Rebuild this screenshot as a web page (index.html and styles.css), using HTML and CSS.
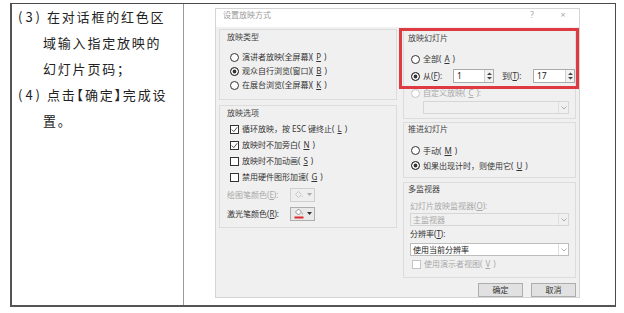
FILE: index.html
```html
<!DOCTYPE html>
<html lang="zh-CN">
<head>
    <meta charset="UTF-8">
    <meta name="viewport" content="width=device-width, initial-scale=1.0">
    <title>设置放映方式</title>
    <link rel="stylesheet" href="styles.css">
</head>
<body>

<div class="page">
    <div class="sheet">

        <!-- Steps text -->
        <div class="steps">
            <p class="step"><span class="step-no">(3)</span>在对话框的红色区<br>域输入指定放映的<br>幻灯片页码；</p>
            <p class="step"><span class="step-no">(4)</span>点击<span class="punct">【</span>确定<span class="punct">】</span>完成设<br>置。</p>
        </div>

        <!-- Dialog screenshot -->
        <div class="shot">
            <div class="dialog">
                <div class="titlebar">
                    <span class="title">设置放映方式</span>
                    <span class="tb-btn">?</span>
                    <span class="tb-btn">×</span>
                </div>

                <div class="dlg-body">
                    <div class="col col-left">
                        <div class="group g-type">
                            <div class="group-title">放映类型</div>
                            <div class="options">
                                <div class="opt"><span class="radio"></span>演讲者放映(全屏幕)(<u>P</u>)</div>
                                <div class="opt"><span class="radio on"></span>观众自行浏览(窗口)(<u>B</u>)</div>
                                <div class="opt"><span class="radio"></span>在展台浏览(全屏幕)(<u>K</u>)</div>
                            </div>
                        </div>

                        <div class="group g-opts">
                            <div class="group-title">放映选项</div>
                            <div class="options">
                                <div class="opt opt-check"><span class="check"><svg width="7" height="7" viewBox="0 0 9 9"><path d="M1 4.6 L3.6 7.2 L8 1.6" fill="none" stroke="#333" stroke-width="1.1"/></svg></span>循环放映，按 ESC 键终止(<u>L</u>)</div>
                                <div class="opt opt-check"><span class="check"><svg width="7" height="7" viewBox="0 0 9 9"><path d="M1 4.6 L3.6 7.2 L8 1.6" fill="none" stroke="#333" stroke-width="1.1"/></svg></span>放映时不加旁白(<u>N</u>)</div>
                                <div class="opt opt-check"><span class="check"></span>放映时不加动画(<u>S</u>)</div>
                                <div class="opt opt-check"><span class="check"></span>禁用硬件图形加速(<u>G</u>)</div>
                                <div class="color-row off">
                                    <span class="color-label">绘图笔颜色(<u>E</u>):</span>
                                    <span class="color-btn">
                                        <svg width="10" height="10" viewBox="0 0 10 10"><path d="M1.5 4.5 L4.5 1.5 L7.5 4.5 L4.5 7.5 Z" fill="none" stroke="#bbb" stroke-width="0.8"/><path d="M8.3 5.5 q0.9 1.3 0 2 q-0.9 -0.7 0 -2 Z" fill="#bbb"/></svg>
                                        <svg width="5" height="3" viewBox="0 0 5 3"><path d="M0 0 L5 0 L2.5 3 Z" fill="#aaa"/></svg>
                                    </span>
                                </div>
                                <div class="color-row">
                                    <span class="color-label">激光笔颜色(<u>R</u>):</span>
                                    <span class="color-btn">
                                        <svg width="10" height="11" viewBox="0 0 10 11"><path d="M1.5 4 L4.5 1 L7.5 4 L4.5 7 Z" fill="#fff" stroke="#777" stroke-width="0.8"/><path d="M8.3 4.8 q0.9 1.3 0 2 q-0.9 -0.7 0 -2 Z" fill="#777"/><rect x="0.5" y="8.5" width="9" height="2" fill="#e02a2a"/></svg>
                                        <svg width="5" height="3" viewBox="0 0 5 3"><path d="M0 0 L5 0 L2.5 3 Z" fill="#333"/></svg>
                                    </span>
                                </div>
                            </div>
                        </div>
                    </div>

                    <div class="col col-right">
                        <div class="group g-slides">
                            <div class="group-title">放映幻灯片</div>
                            <div class="options">
                                <div class="opt"><span class="radio"></span>全部(<u>A</u>)</div>
                                <div class="opt opt-range">
                                    <span class="radio on"></span>
                                    <span class="range-label">从(<u>F</u>):</span>
                                    <span class="spin spin-from"><span class="spin-val">1</span><span class="spin-arrows"><svg width="7" height="10" viewBox="0 0 7 10"><path d="M1 4 L3.5 1.5 L6 4 Z M1 6 L3.5 8.5 L6 6 Z" fill="#444"/></svg></span></span>
                                    <span class="range-label to">到(<u>T</u>):</span>
                                    <span class="spin spin-to"><span class="spin-val">17</span><span class="spin-arrows"><svg width="7" height="10" viewBox="0 0 7 10"><path d="M1 4 L3.5 1.5 L6 4 Z M1 6 L3.5 8.5 L6 6 Z" fill="#444"/></svg></span></span>
                                </div>
                                <div class="opt opt-custom off"><span class="radio"></span>自定义放映(<u>C</u>):</div>
                                <div class="dropdown dd-custom off">
                                    <span class="dd-text"></span>
                                    <span class="dd-arrow"><svg width="6" height="4" viewBox="0 0 6 4"><path d="M0.5 0.5 L3 3 L5.5 0.5" fill="none" stroke="#999" stroke-width="0.8"/></svg></span>
                                </div>
                            </div>
                        </div>

                        <div class="group g-advance">
                            <div class="group-title">推进幻灯片</div>
                            <div class="options">
                                <div class="opt"><span class="radio"></span>手动(<u>M</u>)</div>
                                <div class="opt"><span class="radio on"></span>如果出现计时，则使用它(<u>U</u>)</div>
                            </div>
                        </div>

                        <div class="group g-monitor">
                            <div class="group-title">多监视器</div>
                            <div class="monitor">
                                <div class="field-label off">幻灯片放映监视器(<u>O</u>):</div>
                                <div class="dropdown dd-monitor off">
                                    <span class="dd-text">主监视器</span>
                                    <span class="dd-arrow"><svg width="6" height="4" viewBox="0 0 6 4"><path d="M0.5 0.5 L3 3 L5.5 0.5" fill="none" stroke="#999" stroke-width="0.8"/></svg></span>
                                </div>
                                <div class="field-label res-label">分辨率(<u>T</u>):</div>
                                <div class="dropdown dd-res">
                                    <span class="dd-text">使用当前分辨率</span>
                                    <span class="dd-arrow"><svg width="6" height="4" viewBox="0 0 6 4"><path d="M0.5 0.5 L3 3 L5.5 0.5" fill="none" stroke="#999" stroke-width="0.8"/></svg></span>
                                </div>
                                <div class="opt opt-presenter off"><span class="check"></span>使用演示者视图(<u>V</u>)</div>
                            </div>
                        </div>

                        <div class="actions">
                            <span class="btn">确定</span>
                            <span class="btn">取消</span>
                        </div>
                    </div>
                </div>

                <!-- red highlight around the slide range -->
                <div class="highlight"></div>
            </div>
        </div>

    </div>
</div>

</body>
</html>
```

FILE: styles.css
```css
* {
    box-sizing: border-box;
}
body {
    margin: 0;
    background: #fff;
    font-family: "Noto Sans CJK SC", "Noto Sans", sans-serif;
}
.page {
    padding: 3px 8px 0 10px;
}
.sheet {
    display: grid;
    grid-template-columns: 172px 1fr;
    height: 304px;
    border-top: 1px solid #4a4a4a;
    border-left: 2px solid #555;
    border-bottom: 2px solid #555;
    border-right: 1px solid #4a4a4a;
}

/* left column text */
.steps {
    border-right: 1px solid #9a9a9a;
    padding: 0 4px 0 6px;
}
.step {
    margin: 0;
    font-size: 13px;
    line-height: 26px;
    letter-spacing: 1.8px;
    padding-left: 25px;
    text-indent: -25px;
    color: #222;
    white-space: nowrap;
}
.step-no {
    display: inline-block;
    width: 29px;
    text-indent: 0;
    letter-spacing: 3px;
}
.punct {
    font-feature-settings: "halt";
}

/* dialog */
.shot {
    padding: 4px 0 0 31px;
}
.dialog {
    position: relative;
    width: 365px;
    height: 290px;
    border: 1px solid #d4d4d4;
    background: #f0f0f0;
    font-family: "Noto Sans", "Noto Sans CJK SC", sans-serif;
    font-size: 8px;
    line-height: 12px;
    color: #333;
    display: flex;
    flex-direction: column;
}
.titlebar {
    height: 18px;
    background: #fff;
    display: flex;
    align-items: flex-start;
    padding: 0 8px 0 7px;
    color: #9a9a9a;
}
.title {
    flex: 1;
}
.tb-btn {
    width: 16px;
    text-align: center;
    font-size: 9px;
    color: #aaa;
}
.tb-btn + .tb-btn {
    margin-left: 15px;
}
.dlg-body {
    flex: 1;
    display: flex;
    gap: 6px;
    padding: 0 3px;
}
.col {
    display: flex;
    flex-direction: column;
}
.col-left {
    width: 178px;
}
.col-right {
    width: 173px;
}
.group {
    border: 1px solid #dcdcdc;
    padding-left: 7px;
}
.group-title {
    height: 12px;
    color: #444;
}
.off {
    color: #a8a8a8;
}

.opt {
    display: flex;
    align-items: center;
    gap: 3px;
    height: 14px;
    white-space: nowrap;
}
.radio {
    width: 9px;
    height: 9px;
    flex: none;
    border: 1px solid #333;
    border-radius: 50%;
    background: #fff;
}
.radio.on {
    background: #333;
    box-shadow: inset 0 0 0 1.6px #fff;
}
.off .radio,
.off .check {
    border-color: #c4c4c4;
}
.check {
    width: 9px;
    height: 9px;
    flex: none;
    border: 1px solid #333;
    background: #fff;
    display: flex;
    align-items: center;
    justify-content: center;
}

/* left groups */
.g-type {
    margin-top: 2px;
    height: 71px;
    padding-top: 1px;
}
.g-type .options {
    margin-top: 7px;
    padding-left: 3px;
}
.g-opts {
    margin-top: 5px;
    height: 123px;
    padding-top: 1px;
}
.g-opts .options {
    margin-top: 2px;
    padding-left: 3px;
}
.opt-check {
    height: 16px;
}
.color-row {
    display: flex;
    align-items: center;
    height: 19px;
    margin-left: -3px;
}
.color-label {
    width: 63px;
}
.color-btn {
    width: 25px;
    height: 14px;
    border: 1px solid #adadad;
    background: #e9e9e9;
    display: flex;
    align-items: center;
    justify-content: center;
    gap: 3px;
}
.color-row.off .color-btn {
    border-color: #cfcfcf;
    background: #eeeeee;
}

/* right groups */
.g-slides {
    margin-top: 3px;
    height: 89px;
    padding: 1px 0 0 4px;
}
.g-slides .options {
    margin-top: 8px;
    padding-left: 3px;
}
.opt-range {
    margin-top: 3px;
    gap: 3px;
}
.range-label {
    width: 27px;
}
.range-label.to {
    width: 28px;
    margin-left: 5px;
}
.spin {
    display: flex;
    height: 14px;
    border: 1px solid #ababab;
    background: #fff;
}
.spin-from {
    width: 41px;
}
.spin-to {
    width: 42px;
}
.spin-val {
    flex: 1;
    padding-left: 3px;
    font-size: 8.5px;
    color: #222;
}
.spin-arrows {
    width: 9px;
    border-left: 1px solid #d0d0d0;
    background: #f2f2f2;
    display: flex;
    align-items: center;
    justify-content: center;
}
.opt-custom {
    margin-top: 4px;
    height: 12px;
}
.dropdown {
    display: flex;
    height: 13px;
    border: 1px solid #c8c8c8;
    background: #fff;
}
.dropdown.off {
    background: #f0f0f0;
    border-color: #d6d6d6;
}
.dd-custom {
    margin: 2px 0 0 12px;
    width: 146px;
}
.dd-text {
    flex: 1;
    padding-left: 2px;
    line-height: 11px;
}
.dd-arrow {
    width: 10px;
    border-left: 1px solid #e0e0e0;
    display: flex;
    align-items: center;
    justify-content: center;
}

.g-advance {
    margin-top: 3px;
    height: 56px;
    padding-left: 4px;
}
.g-advance .options {
    margin-top: 8px;
    padding-left: 3px;
}
.g-advance .opt {
    height: 15px;
}

.g-monitor {
    margin-top: 4px;
    height: 96px;
    padding-left: 4px;
}
.monitor {
    padding-left: 2px;
}
.field-label {
    margin-top: 5px;
    height: 12px;
}
.res-label {
    margin-top: 2px;
    color: #333;
}
.dd-monitor {
    margin-top: 1px;
    width: 159px;
}
.dd-res {
    margin-top: 3px;
    width: 159px;
    border-color: #bdbdbd;
    color: #222;
}
.opt-presenter {
    margin-top: 2px;
    height: 12px;
    padding-left: 2px;
}

.actions {
    margin-top: 5px;
    display: flex;
    justify-content: flex-end;
    gap: 8px;
}
.btn {
    width: 45px;
    height: 14px;
    border: 1px solid #adadad;
    background: #e1e1e1;
    text-align: center;
    line-height: 12px;
    color: #333;
}

.highlight {
    position: absolute;
    left: 183px;
    top: 19px;
    width: 180px;
    height: 61px;
    border: 3px solid #dd3b41;
}
```
